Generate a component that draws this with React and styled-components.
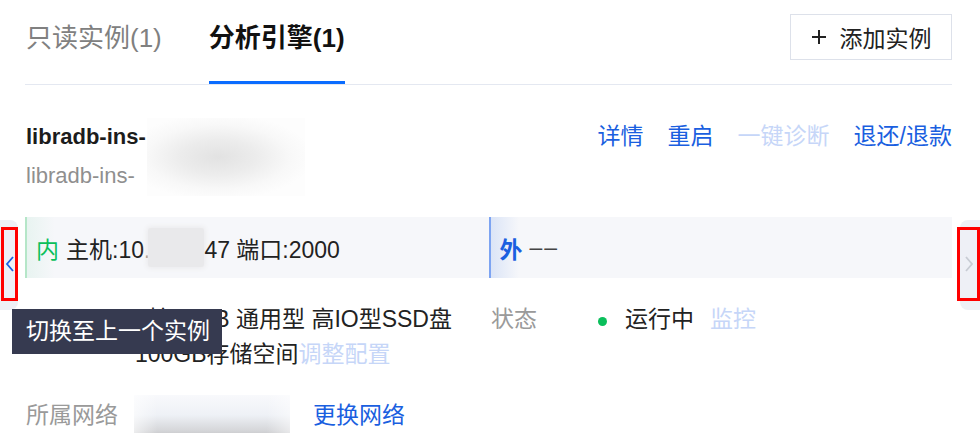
import React from "react";
import styled, { createGlobalStyle } from "styled-components";

const GlobalStyle = createGlobalStyle`
  body {
    margin: 0;
    background: #fff;
    font-family: "Liberation Sans", "Noto Sans CJK SC", sans-serif;
    color: #222;
  }
`;

const Page = styled.div`
  position: relative;
  width: 980px;
  height: 433px;
  overflow: hidden;
  box-sizing: border-box;
  padding: 0 28px 0 25px;
  font-size: 23px;
`;

const TabBar = styled.div`
  display: flex;
  height: 85px;
  box-sizing: border-box;
  border-bottom: 1px solid #e4e8f1;
`;

const Tab = styled.div`
  box-sizing: border-box;
  height: 84px;
  padding-top: 20px;
  margin-left: ${(p) => (p.$first ? "1px" : "0")};
  margin-right: 47px;
  font-size: 26px;
  line-height: 36px;
  font-weight: ${(p) => (p.$active ? 700 : 400)};
  color: ${(p) => (p.$active ? "#111" : "#808080")};
  border-bottom: 3px solid ${(p) => (p.$active ? "#0a6cff" : "transparent")};
`;

const AddButton = styled.div`
  margin-left: auto;
  margin-top: 14px;
  width: 162px;
  height: 46px;
  box-sizing: border-box;
  border: 1px solid #dde1ea;
  display: flex;
  align-items: center;
  justify-content: center;
  gap: 13px;
  font-size: 23px;
  color: #222;
`;

const Header = styled.div`
  display: flex;
  justify-content: space-between;
  padding-top: 32px;
`;

const NameBlock = styled.div`
  position: relative;
  padding-left: 1px;
  font-size: 22px;
  line-height: 39px;
`;

const Name = styled.div`
  font-weight: 700;
  color: #1c1c1c;
`;

const SubName = styled.div`
  color: #8f8f8f;
`;

const NameBlur = styled.div`
  position: absolute;
  left: 122px;
  top: 1px;
  width: 158px;
  height: 78px;
  background: radial-gradient(
    ellipse 60% 55% at 45% 50%,
    #e2e2e2 0%,
    #ececec 40%,
    #f8f8f8 75%,
    #fdfdfd 100%
  );
`;

const Actions = styled.div`
  display: flex;
  gap: 24px;
  line-height: 39px;
  height: 39px;
`;

const Action = styled.span`
  color: ${(p) => (p.$disabled ? "#c6d6f8" : "#1a5fe0")};
`;

const AddrBar = styled.div`
  display: flex;
  margin-top: 22px;
  height: 61px;
  background: #f6f7fa;
`;

const AddrHalf = styled.div`
  flex: 1;
  display: flex;
  align-items: center;
  padding-left: 9px;
  border-left: 2px solid ${(p) => p.$color};
  background: linear-gradient(to right, ${(p) => p.$tint} 0px, transparent 28px);
  white-space: pre;
`;

const Tag = styled.span`
  color: ${(p) => p.$color};
  font-weight: ${(p) => (p.$bold ? 700 : 400)};
  margin-right: 7px;
`;

const Dashes = styled.span`
  color: #444;
  letter-spacing: 2px;
`;

const AddrBlur = styled.span`
  display: inline-block;
  width: 56px;
  height: 39px;
  margin-left: -2px;
  margin-right: 0;
  background: #e9e9eb;
  box-shadow: 0 0 4px 2px #ededef;
  border-radius: 3px;
`;

const SpecRow = styled.div`
  display: flex;
  margin-top: 24px;
  line-height: 35px;
`;

const Half = styled.div`
  display: flex;
  width: ${(p) => p.$w}px;
  flex: ${(p) => (p.$grow ? 1 : "none")};
`;

const Label = styled.div`
  width: ${(p) => p.$w}px;
  flex: none;
  color: #9a9a9a;
  padding-left: 1px;
`;

const Value = styled.div`
  color: #222;
  white-space: nowrap;
`;

const Link = styled.span`
  color: ${(p) => (p.$disabled ? "#c6d6f8" : "#1a5fe0")};
  margin-left: ${(p) => p.$ml || 0}px;
`;

const Dot = styled.span`
  display: inline-block;
  width: 9px;
  height: 9px;
  border-radius: 50%;
  background: #0abf5b;
  margin: 0 18px 0 0;
  vertical-align: 1px;
`;

const NetRow = styled.div`
  display: flex;
  align-items: center;
  margin-top: 13px;
  line-height: 35px;
`;

const NetBlur = styled.span`
  display: inline-block;
  width: 156px;
  height: 50px;
  margin-top: 10px;
  background: linear-gradient(
      to right,
      rgba(255, 255, 255, 0.6),
      rgba(255, 255, 255, 0) 15%,
      rgba(255, 255, 255, 0) 85%,
      rgba(255, 255, 255, 0.5)
    ),
    linear-gradient(
      to bottom,
      #f8f9fc 0%,
      #eef1f6 40%,
      #d6d7da 70%,
      #adadaf 100%
    );
`;

const Tooltip = styled.div`
  position: absolute;
  left: 12px;
  top: 309px;
  width: 210px;
  height: 45px;
  box-sizing: border-box;
  padding-left: 14px;
  background: #363a50;
  color: #fff;
  font-size: 23px;
  line-height: 45px;
`;

const NavTab = styled.div`
  position: absolute;
  top: 220px;
  height: 90px;
  width: ${(p) => p.$w}px;
  left: ${(p) => p.$left}px;
  background: #eef0f6;
  border-radius: ${(p) => (p.$side === "left" ? "0 8px 8px 0" : "8px 0 0 8px")};
`;

const RedMark = styled.div`
  position: absolute;
  top: 227px;
  left: ${(p) => p.$left}px;
  width: ${(p) => p.$w}px;
  height: 74px;
  box-sizing: border-box;
  border: 3px solid #ff0000;
  display: flex;
  align-items: center;
  justify-content: center;
`;

const Chevron = ({ dir, color }) => (
  <svg width="10" height="18" viewBox="0 0 10 18">
    <path
      d={dir === "left" ? "M8 2 L2 9 L8 16" : "M2 2 L8 9 L2 16"}
      fill="none"
      stroke={color}
      strokeWidth="1.8"
    />
  </svg>
);

const PlusIcon = () => (
  <svg width="16" height="16" viewBox="0 0 16 16">
    <path d="M8 1 V15 M1 8 H15" stroke="#222" strokeWidth="2" />
  </svg>
);

export default function App() {
  return (
    <>
      <GlobalStyle />
      <Page>
        <TabBar>
          <Tab $first>只读实例(1)</Tab>
          <Tab $active>分析引擎(1)</Tab>
          <AddButton>
            <PlusIcon />
            添加实例
          </AddButton>
        </TabBar>

        <Header>
          <NameBlock>
            <Name>libradb-ins-</Name>
            <SubName>libradb-ins-</SubName>
            <NameBlur />
          </NameBlock>
          <Actions>
            <Action>详情</Action>
            <Action>重启</Action>
            <Action $disabled>一键诊断</Action>
            <Action>退还/退款</Action>
          </Actions>
        </Header>

        <AddrBar>
          <AddrHalf $color="#b5e6c8" $tint="rgba(10,191,91,0.06)">
            <Tag $color="#0abf5b">内</Tag>主机:10.<AddrBlur />47 端口:2000
          </AddrHalf>
          <AddrHalf $color="#7da4f2" $tint="rgba(26,95,224,0.12)">
            <Tag $color="#1a5fe0" $bold>外</Tag>
            <Dashes>––</Dashes>
          </AddrHalf>
        </AddrBar>

        <SpecRow>
          <Half $w={465}>
            <Label $w={109} />
            <Value>
              <div>4核16GB 通用型 高IO型SSD盘</div>
              <div>
                100GB存储空间<Link $disabled>调整配置</Link>
              </div>
            </Value>
          </Half>
          <Half $grow>
            <Label $w={107}>状态</Label>
            <Value>
              <Dot />
              运行中<Link $disabled $ml={16}>监控</Link>
            </Value>
          </Half>
        </SpecRow>

        <NetRow>
          <Label $w={108}>所属网络</Label>
          <NetBlur />
          <Link $ml={23}>更换网络</Link>
        </NetRow>

        <NavTab $side="left" $left={0} $w={18} />
        <RedMark $left={1} $w={17}>
          <Chevron dir="left" color="#1a5fe0" />
        </RedMark>
        <NavTab $side="right" $left={960} $w={20} />
        <RedMark $left={957} $w={23}>
          <Chevron dir="right" color="#c8ccd4" />
        </RedMark>

        <Tooltip>切换至上一个实例</Tooltip>
      </Page>
    </>
  );
}
